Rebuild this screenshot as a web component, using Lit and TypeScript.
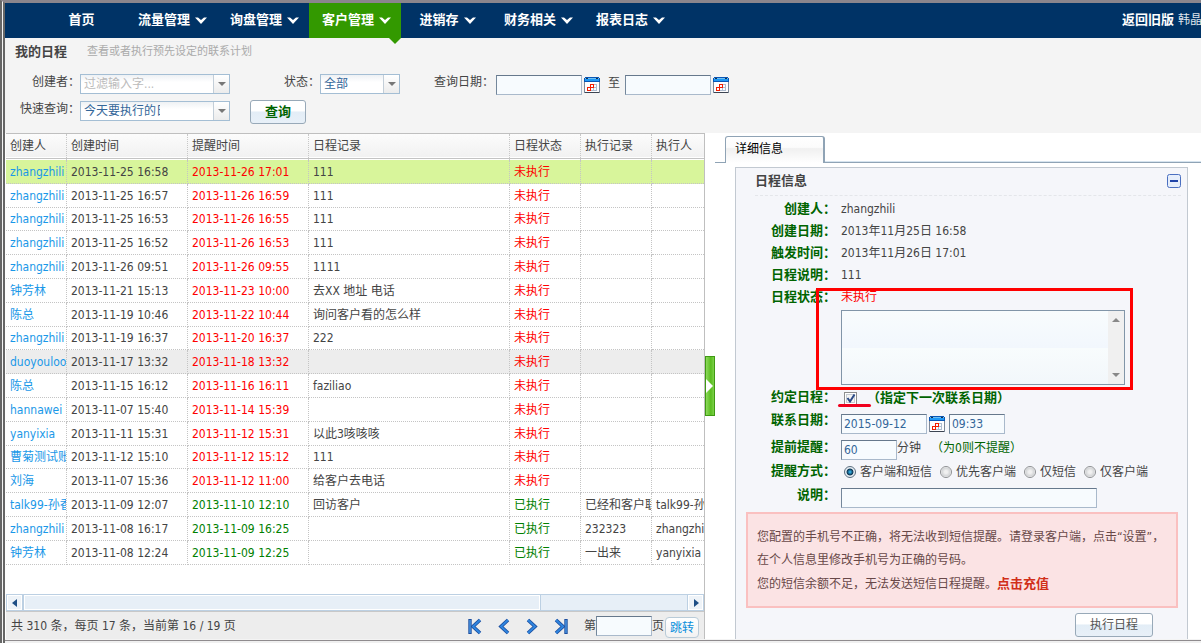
import { LitElement, html, css, svg, nothing } from "lit";
import { customElement, state } from "lit/decorators.js";
import { classMap } from "lit/directives/class-map.js";

interface Plan {
  owner: string;
  created: string;
  remind: string;
  note: string;
  done: boolean;
  record: string;
  executor: string;
}

const plan = (
  owner: string,
  created: string,
  remind: string,
  note = "",
  done = false,
  record = "",
  executor = ""
): Plan => ({ owner, created, remind, note, done, record, executor });

const PLANS: Plan[] = [
  plan("zhangzhili", "2013-11-25 16:58", "2013-11-26 17:01", "111"),
  plan("zhangzhili", "2013-11-25 16:57", "2013-11-26 16:59", "111"),
  plan("zhangzhili", "2013-11-25 16:53", "2013-11-26 16:55", "111"),
  plan("zhangzhili", "2013-11-25 16:52", "2013-11-26 16:53", "111"),
  plan("zhangzhili", "2013-11-26 09:51", "2013-11-26 09:55", "1111"),
  plan("钟芳林", "2013-11-21 15:13", "2013-11-23 10:00", "去XX 地址 电话"),
  plan("陈总", "2013-11-19 10:46", "2013-11-22 10:44", "询问客户看的怎么样"),
  plan("zhangzhili", "2013-11-19 16:37", "2013-11-20 16:37", "222"),
  plan("duoyouloo", "2013-11-17 13:32", "2013-11-18 13:32"),
  plan("陈总", "2013-11-15 16:12", "2013-11-16 16:11", "faziliao"),
  plan("hannawei", "2013-11-07 15:40", "2013-11-14 15:39"),
  plan("yanyixia", "2013-11-11 15:31", "2013-11-12 15:31", "以此3咳咳咳"),
  plan("曹菊测试账", "2013-11-12 15:10", "2013-11-12 15:12", "111"),
  plan("刘海", "2013-11-07 15:36", "2013-11-12 11:00", "给客户去电话"),
  plan("talk99-孙香", "2013-11-09 12:07", "2013-11-10 12:10", "回访客户", true, "已经和客户联", "talk99-孙香"),
  plan("zhangzhili", "2013-11-08 16:17", "2013-11-09 16:25", "", true, "232323", "zhangzhili"),
  plan("钟芳林", "2013-11-08 12:24", "2013-11-09 12:25", "", true, "一出来", "yanyixia"),
];

const NAV = [
  { text: "首页", menu: false },
  { text: "流量管理", menu: true },
  { text: "询盘管理", menu: true },
  { text: "客户管理", menu: true, active: true },
  { text: "进销存", menu: true },
  { text: "财务相关", menu: true },
  { text: "报表日志", menu: true },
];

const HEADS = ["创建人", "创建时间", "提醒时间", "日程记录", "日程状态", "执行记录", "执行人"];

const chevron = html`<svg class="chevron" width="12" height="7" viewBox="0 0 12 7" aria-hidden="true">
  <path d="M0 0.5H3L6 3L9 0.5H12L6 7Z" fill="currentColor" />
</svg>`;

const calendar = html`<svg width="16" height="17" viewBox="0 0 16 17" shape-rendering="crispEdges" aria-hidden="true">
  <path d="M0 4H16V16H0Z" fill="#7c8898" />
  <path d="M1 5H15V15H1Z" fill="#fdfdff" />
  <path d="M1 0H15V1H16V5H0V1H1Z" fill="#0a56b4" />
  <path d="M1 1H15V2H1Z" fill="#6cc0f5" />
  <path d="M1 2H15V4H1Z" fill="#1e98f5" />
  <path d="M2 1H4V2H2ZM12 1H14V2H12Z" fill="#1a2c48" />
  <path d="M1 15H15V16H1Z" fill="#3c4452" />
  <path d="M9.5 7.5H12.5V13.5H6.5M9.5 10.5H12.5M9.5 10.5V13.5" fill="none" stroke="#aebccf" />
  <path d="M6.5 7.5H9.5V10.5H6.5ZM3.5 10.5H6.5V13.5H3.5Z" fill="none" stroke="#f21c00" />
</svg>`;

const arrow = (dir: "left" | "right" | "up" | "down", color: string) => {
  const paths = {
    left: "M6 0V8L1 4Z",
    right: "M2 0V8L7 4Z",
    up: "M0 6H8L4 2Z",
    down: "M0 2H8L4 6Z",
  };
  return html`<svg width="8" height="8" viewBox="0 0 8 8" aria-hidden="true"><path d=${paths[dir]} fill=${color} /></svg>`;
};

const pagerIcon = (back: boolean, bar: boolean) => {
  const shape = back ? "M12 2L5 8.5L12 15" : "M4 2L11 8.5L4 15";
  const x = back ? 2 : 14;
  return html`<svg width="16" height="17" viewBox="0 0 16 17" aria-hidden="true">
    <path d=${shape} fill="none" stroke="#1d4fa0" stroke-width="3.6" />
    <path d=${shape} fill="none" stroke="#2f86e0" stroke-width="1.8" />
    ${bar
      ? svg`<path d="M${x} 1V16" stroke="#1d4fa0" stroke-width="3.4" /><path d="M${x} 2V15" stroke="#4a97e6" stroke-width="1.4" />`
      : nothing}
  </svg>`;
};

@customElement("app-root")
export class AppRoot extends LitElement {
  @state() private selected = 0;

  static styles = css`
    :host {
      display: block;
      font: 12px/22px "DejaVu Sans Condensed", "Noto Sans CJK SC", sans-serif;
      color: #444;
    }
    * {
      box-sizing: border-box;
    }
    input,
    select,
    button,
    textarea {
      font: inherit;
      margin: 0;
      color: #336699;
      border-radius: 0;
    }
    a {
      text-decoration: none;
      color: inherit;
    }
    svg {
      display: block;
      flex: none;
    }
    .window {
      height: 100vh;
      display: flex;
      flex-direction: column;
      border-top: 3px solid #8a858c;
      border-left: 5px double #666;
      background: #f4f4f4;
      overflow: hidden;
      white-space: nowrap;
    }
    .nav {
      flex: none;
      display: flex;
      height: 35px;
      padding-left: 30px;
      background: #003366;
      color: #fff;
      font-size: 13px;
      font-weight: bold;
      line-height: 33px;
    }
    .nav-item {
      position: relative;
      display: flex;
      justify-content: center;
      gap: 5px;
      min-width: 90px;
      padding: 0 10px 0 13px;
    }
    .nav-item.active {
      background: #339900;
    }
    .nav-item.active::after {
      content: "";
      position: absolute;
      top: 35px;
      right: 0;
      border: 6px solid transparent;
      border-top-color: #339900;
      border-bottom: 0;
    }
    .chevron {
      margin-top: 14px;
    }
    .account {
      display: flex;
      gap: 4px;
      margin-left: auto;
      width: 79px;
      line-height: 34px;
      overflow: hidden;
    }
    .user {
      font-size: 12px;
      font-weight: normal;
      color: #dde4ec;
    }
    .filters {
      flex: none;
      height: 95px;
      padding: 3px 10px 0;
    }
    .heading {
      display: flex;
      gap: 20px;
      margin: 0;
      font-size: 13px;
    }
    .subtitle {
      font-size: 11px;
      font-weight: normal;
      color: #aaa;
    }
    .filter-row {
      display: flex;
      align-items: flex-start;
      height: 27px;
      margin-top: 8px;
    }
    .filter-row + .filter-row {
      margin-top: 0;
    }
    .filter-label {
      width: 65px;
      text-align: right;
    }
    .filter-label.status {
      width: 90px;
    }
    .filter-label.range {
      width: 94px;
    }
    .combo {
      display: flex;
      width: 150px;
      height: 20px;
      margin-top: 3px;
      border: 1px solid #a4bed4;
      background: linear-gradient(#eef1f4, #fff 40%);
    }
    .combo.small {
      width: 80px;
    }
    .combo-input,
    .combo-select {
      flex: 1;
      min-width: 0;
      border: 0;
      background: none;
      padding: 0 0 0 3px;
      line-height: 18px;
      outline: none;
      appearance: none;
    }
    .combo-select.cut {
      padding-right: 53px;
    }
    .combo-input::placeholder {
      color: #bbb;
    }
    .combo-arrow {
      flex: none;
      display: flex;
      align-items: center;
      justify-content: center;
      width: 16px;
      border-left: 1px solid #c3ced8;
      background: linear-gradient(#fff, #ececec);
      pointer-events: none;
    }
    .field {
      width: 86px;
      height: 20px;
      padding: 0 2px;
      border: 1px solid #a9b9cb;
      border-top-color: #66788c;
      border-left-color: #74879b;
      background: #f7fbfe;
      outline: none;
    }
    .field.short {
      width: 56px;
    }
    .field.wide {
      width: 256px;
    }
    .filter-row .field {
      margin: 4px 0 0 2px;
    }
    .icon-button {
      padding: 0;
      border: 0;
      background: none;
      cursor: pointer;
    }
    .filter-row .icon-button {
      margin: 6px 0 0 2px;
    }
    .to {
      margin: 1px 3px 0 8px;
    }
    .button {
      border: 1px solid #98a9b8;
      border-radius: 3px;
      background: linear-gradient(#fff 45%, #e3edf6 50%, #e8f0f8);
      padding: 0;
      line-height: 22px;
      height: 24px;
    }
    .button.query {
      width: 56px;
      margin: 2px 0 0 20px;
      color: #006400;
      font-size: 13px;
      font-weight: bold;
    }
    .button.run {
      width: 78px;
      color: #555;
    }
    .button.go {
      width: 34px;
      height: 21px;
      margin: 5px 5px 0 1px;
      border-color: #b9cbd8;
      border-radius: 4px;
      background: linear-gradient(#fff, #f2f2f2);
      color: #0a8fdc;
      line-height: 18px;
    }
    .main {
      flex: 1;
      min-height: 0;
      display: grid;
      grid-template-columns: minmax(0, 1fr) 10px 486px;
      grid-template-rows: minmax(0, 1fr);
      padding-left: 1px;
      background: #fff;
    }
    .list {
      display: flex;
      flex-direction: column;
      min-width: 0;
      border-top: 1px solid #bfbfbf;
      border-right: 1px solid #bfbfbf;
    }
    .table-view {
      flex: 1;
      min-height: 0;
      overflow: hidden;
    }
    .table {
      width: 900px;
      table-layout: fixed;
      border-collapse: separate;
      border-spacing: 0;
    }
    .c0 { width: 61px; }
    .c1 { width: 121px; }
    .c3 { width: 201px; }
    .c4 { width: 71px; }
    .head {
      height: 26px;
      padding: 0 0 2px 4px;
      text-align: left;
      font-weight: normal;
      background: linear-gradient(#fcfcfc, #f1f1f1 23px, #fff 23px, #fff 24px, #c4c4c4 24px, #c4c4c4 25px, #fff 25px);
      border-right: 1px dotted #c8c8c8;
      overflow: hidden;
    }
    .row {
      height: 24px;
    }
    .row:nth-child(5n + 3) {
      height: 23px;
    }
    .row.hover {
      background: #ededed;
    }
    .row.selected {
      background: #d8f59b;
    }
    .cell {
      padding: 0 0 0 4px;
      line-height: 22px;
      border-right: 1px dotted #c4c4c4;
      border-bottom: 1px dotted #c4c4c4;
      overflow: hidden;
    }
    .owner {
      color: #1a98e8;
    }
    .todo {
      color: #f00;
    }
    .done {
      color: #008000;
    }
    .scrollbar {
      flex: none;
      display: flex;
      height: 17px;
      background: #e7eff7;
      border-top: 1px solid #bcd0e3;
      border-bottom: 1px solid #bcd0e3;
    }
    .scroll-button {
      display: flex;
      align-items: center;
      justify-content: center;
      width: 17px;
      padding: 0;
      border: 1px solid #bcd0e3;
      border-width: 0 1px;
      background: #eef3f8;
      box-shadow: inset 0 0 0 1px #fff;
    }
    .track {
      flex: 1;
    }
    .thumb {
      width: 78%;
      height: 15px;
      border: 1px solid #bcd0e3;
      border-width: 0 1px;
      box-shadow: inset 0 0 0 1px #fff;
    }
    .pager {
      flex: none;
      display: flex;
      align-items: flex-start;
      height: 28px;
      padding-left: 5px;
      border-top: 1px solid #c8c8c8;
      background: #ededed;
      line-height: 28px;
    }
    .pager-nav {
      display: flex;
      gap: 12px;
      margin: 6px 16px 0 auto;
    }
    .pager .field {
      margin-top: 4px;
    }
    .handle-column {
      display: flex;
      align-items: center;
    }
    .handle {
      display: flex;
      align-items: center;
      justify-content: center;
      width: 10px;
      height: 60px;
      padding: 0;
      border: 1px solid #3f9a12;
      background: linear-gradient(90deg, #8ed95c, #59bd1f 60%, #7dd14a);
    }
    .detail {
      display: flex;
      flex-direction: column;
      padding-top: 3px;
      min-width: 0;
    }
    .tabs {
      flex: none;
      display: flex;
      height: 27px;
    }
    .tabs::before,
    .tabs::after {
      content: "";
      width: 10px;
      border-bottom: 1px solid #8fa3b5;
    }
    .tabs::after {
      flex: 1;
      box-shadow: inset 0 -1px #d6e4ef;
    }
    .tab {
      width: 100px;
      padding: 0 0 2px 9px;
      border: 1px solid #8fa3b5;
      border-bottom: 0;
      border-right-width: 2px;
      border-radius: 3px 3px 0 0;
      background: linear-gradient(#fff, #fbfbfb 40%, #f0f0f0 45%, #fff);
      color: #000;
      text-align: left;
    }
    .panel {
      position: relative;
      flex: 1;
      min-height: 0;
      margin: 4px 13px 0 20px;
      border: 1px solid #c2c9d1;
      border-bottom: 0;
      background: #f5f6fa;
    }
    .panel-head {
      display: flex;
      align-items: center;
      justify-content: space-between;
      height: 28px;
      margin: 0 6px 2px 19px;
      padding-bottom: 2px;
      border-bottom: 1px dashed #e4e6ea;
      font-size: 13px;
      font-weight: bold;
    }
    .form-row {
      display: flex;
      height: 22px;
    }
    .form-row.area {
      height: 78px;
      padding-top: 2px;
    }
    .form-row.date {
      height: 28px;
    }
    .form-row.mid {
      height: 24px;
    }
    .form-label {
      flex: none;
      width: 100px;
      margin-right: 5px;
      text-align: right;
      color: #006400;
      font-size: 13px;
      font-weight: bold;
    }
    .form-row .field {
      margin-top: 4px;
    }
    .form-row.date .field.near,
    .form-row.date .form-label.near {
      margin-top: 1px;
    }
    .form-row.date .field.near {
      margin-top: 6px;
    }
    .form-row.date .icon-button {
      align-self: flex-start;
      margin: 8px 4px 0 2px;
    }
    .text-box {
      display: flex;
      width: 284px;
      height: 75px;
      border: 1px solid #8195a8;
      background: linear-gradient(#f8fcfd, #f2f7fd 50%, #f8fcfd 51%, #f2f7fb);
    }
    .text-area {
      flex: 1;
      border: 0;
      background: none;
      resize: none;
      outline: none;
      overflow: hidden;
    }
    .text-scroll {
      display: flex;
      flex-direction: column;
      justify-content: space-between;
      align-items: center;
      width: 16px;
      padding: 5px 0;
      background: #f0f0f0;
    }
    .tick {
      appearance: none;
      width: 13px;
      height: 13px;
      margin: 6px 0 0 3px;
      border: 1px solid #8d8d8d;
      background: #f4f4f4;
      box-shadow: inset 0 0 0 1px #fff, inset 0 0 0 2px #c6cbd2;
    }
    .tick-box {
      position: relative;
      display: flex;
    }
    .tick-mark {
      position: absolute;
      top: 7px;
      left: 5px;
      pointer-events: none;
    }
    .next {
      margin-left: 10px;
      padding-top: 1px;
      color: #006400;
      font-size: 13px;
      font-weight: bold;
    }
    .hint {
      margin-left: 10px;
      color: #006400;
    }
    .unit {
      line-height: 24px;
    }
    .choice {
      display: flex;
      align-items: center;
      gap: 4px;
      margin-left: 3px;
      margin-right: 5px;
      line-height: 24px;
    }
    .radio {
      appearance: none;
      width: 12px;
      height: 12px;
      border: 1px solid #8d8f92;
      border-radius: 50%;
      background: radial-gradient(#f0f0f0 20%, #d2d4d6 60%, #fff 70%);
    }
    .radio:checked {
      border-color: #5c6f80;
      background: radial-gradient(#2fa4d8 10%, #0c3552 42%, #e6edf3 55%);
    }
    .alert {
      margin: 0 9px 0 10px;
      padding: 12px 9px 10px;
      border: 2px solid #fac0c0;
      background: #fbe3e4;
      color: #684848;
      line-height: 23px;
    }
    .recharge {
      font-size: 13px;
      font-weight: bold;
      color: #d12f19;
    }
    .actions {
      display: flex;
      justify-content: flex-end;
      padding: 5px 34px 0 0;
    }
    .mark-box {
      position: absolute;
      left: 80px;
      top: 120px;
      width: 317px;
      height: 102px;
      border: 3px solid #f00;
      pointer-events: none;
    }
    .mark-line {
      position: absolute;
      left: 102px;
      top: 236px;
      width: 33px;
      height: 3px;
      border-radius: 2px;
      background: #f0001e;
      pointer-events: none;
    }
    .status-line {
      flex: none;
      height: 4px;
      border-top: 1px solid #f4f4f4;
      border-bottom: 2px solid #f0f0f0;
      background: #8f8b8e;
    }
  `;

  private renderRow(p: Plan, i: number) {
    const tone = p.done ? "done" : "todo";
    return html`<tr
      class=${classMap({ row: true, selected: i === this.selected, hover: i === 8 })}
      @click=${() => (this.selected = i)}
    >
      <td class="cell"><a class="owner" href="#">${p.owner}</a></td>
      <td class="cell">${p.created}</td>
      <td class="cell ${tone}">${p.remind}</td>
      <td class="cell">${p.note}</td>
      <td class="cell ${tone}">${p.done ? "已执行" : "未执行"}</td>
      <td class="cell">${p.record}</td>
      <td class="cell">${p.executor}</td>
    </tr>`;
  }

  private renderFilters() {
    return html`<section class="filters">
      <h1 class="heading">我的日程<span class="subtitle">查看或者执行预先设定的联系计划</span></h1>
      <div class="filter-row">
        <label class="filter-label" for="creator">创建者：</label>
        <div class="combo">
          <input class="combo-input" id="creator" placeholder="过滤输入字..." />
          <span class="combo-arrow">${arrow("down", "#777")}</span>
        </div>
        <label class="filter-label status" for="status">状态：</label>
        <div class="combo small">
          <select class="combo-select" id="status"><option>全部</option></select>
          <span class="combo-arrow">${arrow("down", "#777")}</span>
        </div>
        <label class="filter-label range" for="from">查询日期：</label>
        <input class="field" id="from" />
        <button class="icon-button" aria-label="选择开始日期">${calendar}</button>
        <label class="to" for="to">至</label>
        <input class="field" id="to" />
        <button class="icon-button" aria-label="选择结束日期">${calendar}</button>
      </div>
      <div class="filter-row">
        <label class="filter-label" for="quick">快速查询：</label>
        <div class="combo">
          <select class="combo-select cut" id="quick"><option>今天要执行的日程</option></select>
          <span class="combo-arrow">${arrow("down", "#777")}</span>
        </div>
        <button class="button query">查询</button>
      </div>
    </section>`;
  }

  private renderList() {
    return html`<section class="list">
      <div class="table-view">
        <table class="table">
          <colgroup>
            <col class="c0" /><col class="c1" /><col class="c1" /><col class="c3" />
            <col class="c4" /><col class="c4" /><col />
          </colgroup>
          <thead>
            <tr>${HEADS.map((h) => html`<th class="head">${h}</th>`)}</tr>
          </thead>
          <tbody>${PLANS.map((p, i) => this.renderRow(p, i))}</tbody>
        </table>
      </div>
      <div class="scrollbar">
        <button class="scroll-button" aria-label="向左">${arrow("left", "#1f4f86")}</button>
        <div class="track"><div class="thumb"></div></div>
        <button class="scroll-button" aria-label="向右">${arrow("right", "#1f4f86")}</button>
      </div>
      <div class="pager">
        <span>共 310 条，每页 17 条，当前第 16 / 19 页</span>
        <div class="pager-nav">
          <button class="icon-button" aria-label="首页">${pagerIcon(true, true)}</button>
          <button class="icon-button" aria-label="上一页">${pagerIcon(true, false)}</button>
          <button class="icon-button" aria-label="下一页">${pagerIcon(false, false)}</button>
          <button class="icon-button" aria-label="末页">${pagerIcon(false, true)}</button>
        </div>
        <label for="page">第</label>
        <input class="field short" id="page" />
        <span>页</span>
        <button class="button go">跳转</button>
      </div>
    </section>`;
  }

  private renderDetail() {
    const facts = [
      ["创建人：", "zhangzhili"],
      ["创建日期：", "2013年11月25日 16:58"],
      ["触发时间：", "2013年11月26日 17:01"],
      ["日程说明：", "111"],
      ["日程状态：", "未执行"],
    ];
    const ways = ["客户端和短信", "优先客户端", "仅短信", "仅客户端"];
    return html`<section class="detail">
      <div class="tabs"><button class="tab">详细信息</button></div>
      <div class="panel">
        <div class="panel-head">
          <span>日程信息</span>
          <button class="icon-button" aria-label="收起">
            <svg width="14" height="14" viewBox="0 0 14 14">
              <rect x="0.5" y="0.5" width="13" height="13" rx="2" fill="#e6eefb" stroke="#4a6fc0" />
              <path d="M3 7H11" stroke="#2044a8" stroke-width="2" />
            </svg>
          </button>
        </div>
        ${facts.map(
          ([k, v]) => html`<div class="form-row">
            <span class="form-label">${k}</span>
            <span class=${v === "未执行" ? "todo" : "value"}>${v}</span>
          </div>`
        )}
        <div class="form-row area">
          <span class="form-label"></span>
          <div class="text-box">
            <textarea class="text-area" aria-label="执行记录"></textarea>
            <div class="text-scroll">${arrow("up", "#888")}${arrow("down", "#888")}</div>
          </div>
        </div>
        <div class="form-row">
          <label class="form-label" for="next">约定日程：</label>
          <span class="tick-box">
            <input class="tick" type="checkbox" id="next" .checked=${true} />
            <svg class="tick-mark" width="10" height="10" viewBox="0 0 10 10">
              <path d="M1.5 5L4 8.5L8.5 1.5" fill="none" stroke="#2c4a86" stroke-width="2" />
            </svg>
          </span>
          <span class="next">（指定下一次联系日期）</span>
        </div>
        <div class="form-row date">
          <label class="form-label near" for="date">联系日期：</label>
          <input class="field near" id="date" value="2015-09-12" />
          <button class="icon-button" aria-label="选择联系日期">${calendar}</button>
          <input class="field near short" aria-label="联系时间" value="09:33" />
        </div>
        <div class="form-row mid">
          <label class="form-label" for="ahead">提前提醒：</label>
          <input class="field short" id="ahead" value="60" />
          <span class="unit">分钟<span class="hint">（为0则不提醒）</span></span>
        </div>
        <div class="form-row mid">
          <span class="form-label">提醒方式：</span>
          ${ways.map(
            (w, i) => html`<label class="choice">
              <input class="radio" type="radio" name="way" .checked=${i === 0} />${w}
            </label>`
          )}
        </div>
        <div class="form-row date">
          <label class="form-label" for="memo">说明：</label>
          <input class="field wide" id="memo" />
        </div>
        <div class="alert">
          您配置的手机号不正确，将无法收到短信提醒。请登录客户端，点击“设置”，<br />
          在个人信息里修改手机号为正确的号码。<br />
          您的短信余额不足，无法发送短信日程提醒。<a class="recharge" href="#">点击充值</a>
        </div>
        <div class="actions"><button class="button run">执行日程</button></div>
        <div class="mark-box"></div>
        <div class="mark-line"></div>
      </div>
    </section>`;
  }

  render() {
    return html`<div class="window">
      <nav class="nav">
        ${NAV.map(
          (n) => html`<a class=${classMap({ "nav-item": true, active: !!n.active })} href="#">
            ${n.text}${n.menu ? chevron : nothing}
          </a>`
        )}
        <span class="account"><a href="#">返回旧版</a><span class="user">韩晶</span></span>
      </nav>
      ${this.renderFilters()}
      <main class="main">
        ${this.renderList()}
        <div class="handle-column">
          <button class="handle" aria-label="收起面板">
            <svg width="8" height="14" viewBox="0 0 8 14"><path d="M0 0L7 7L0 14Z" fill="#fff" /></svg>
          </button>
        </div>
        ${this.renderDetail()}
      </main>
      <div class="status-line"></div>
    </div>`;
  }
}
